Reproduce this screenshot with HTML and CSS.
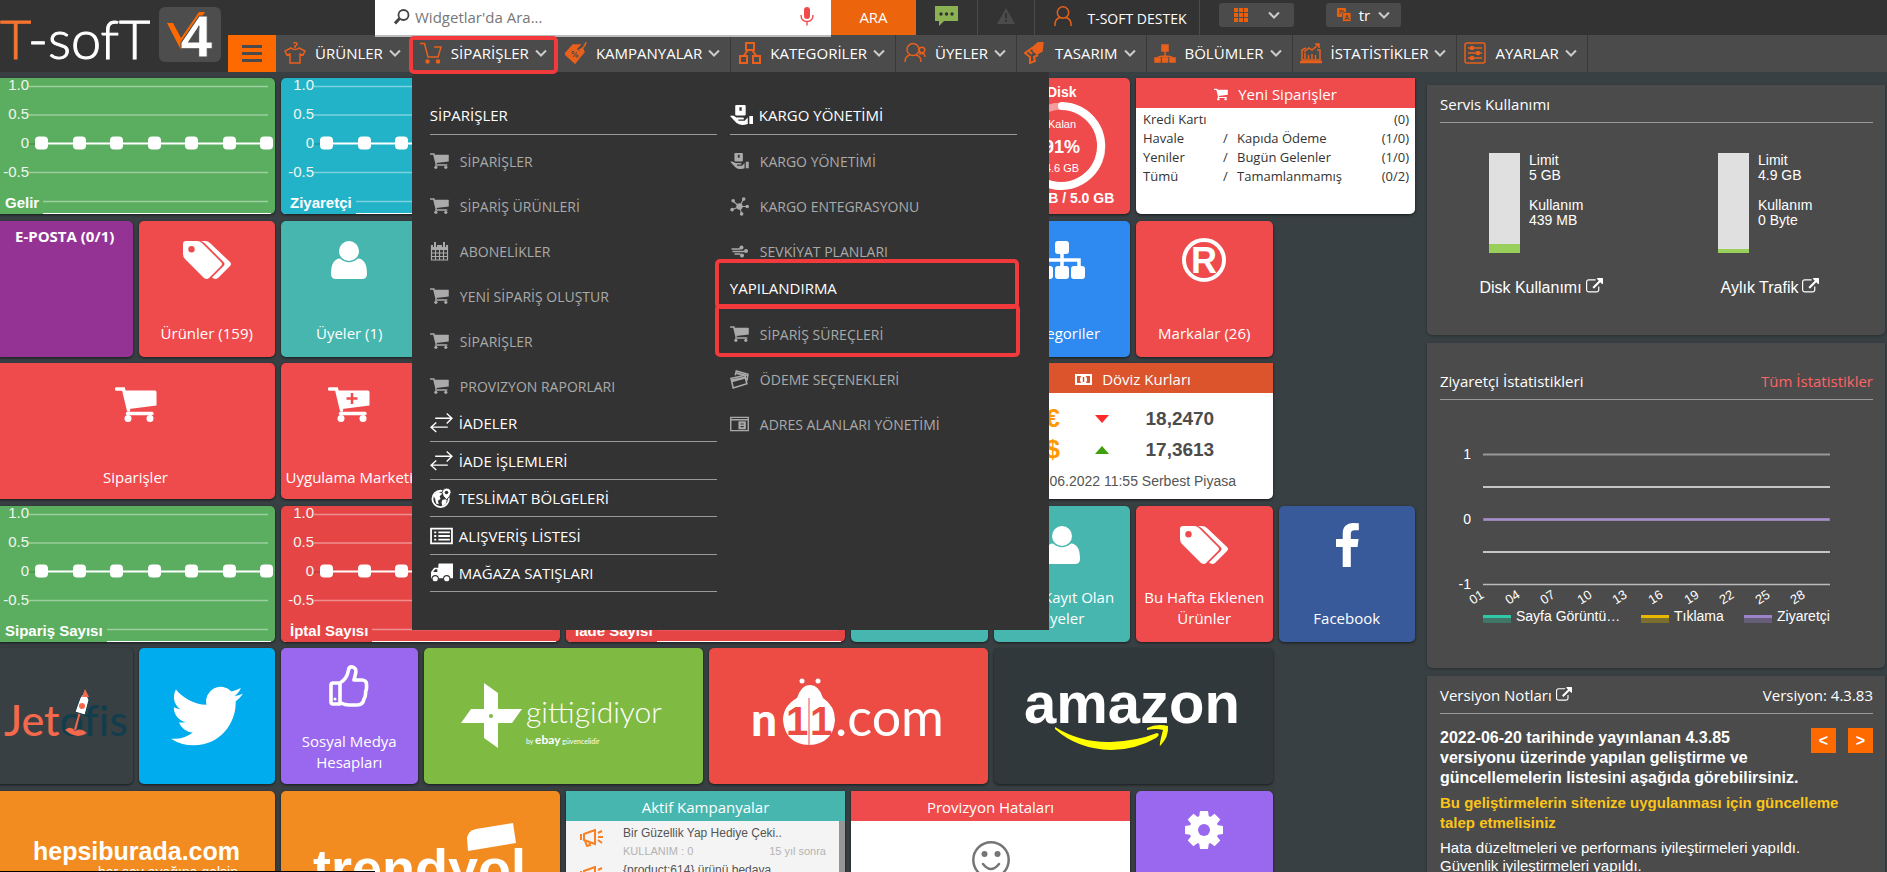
FILE: index.html
```html
<!DOCTYPE html>
<html lang="tr">
<head>
<meta charset="utf-8">
<title>T-Soft V4</title>
<link rel="stylesheet" href="styles.css">
</head>
<body>
<svg class="defs" aria-hidden="true">
  <symbol id="cart" viewBox="0 0 42 35"><path d="M1.5 2H8.5L13.5 23" fill="none" stroke="currentColor" stroke-width="3.4" stroke-linecap="round"/><path d="M8 3.5H40Q41.500 3.500 41.500 5V18.500L14 22Z" fill="currentColor"/><path d="M12.500 26.500H37" stroke="currentColor" stroke-width="3.400" stroke-linecap="round"/><circle cx="13" cy="31.500" r="3.500" fill="currentColor"/><circle cx="35" cy="31.500" r="3.500" fill="currentColor"/></symbol>
  <symbol id="tags" viewBox="0 0 48 38"><path fill="currentColor" fill-rule="evenodd" d="M0 3Q0 0 3 0H14Q17 0 19 2L38 21Q40 23 38 25L26 37Q24 39 21 37L2 18Q0 16 0 13ZM8.500 5A3.200 3.200 0 1 0 8.500 11.400A3.200 3.200 0 1 0 8.500 5Z"/><path fill="currentColor" d="M18 0H22Q25 0 27 2L47 21Q49 23 47 25L35 37Q32 39 29 36.500L40.500 25Q42.500 23 40.500 21L22 2.500Q20 0.500 18 0Z"/></symbol>
  <symbol id="user" viewBox="0 0 36 38"><circle cx="18" cy="10" r="10" fill="currentColor"/><path fill="currentColor" d="M9 17.500Q18 25 27 17.500Q36 18 36 33Q36 38 31 38H5Q0 38 0 33Q0 18 9 17.500Z"/></symbol>
  <symbol id="chev" viewBox="0 0 12 8"><path d="M1 1.500L6 6.500L11 1.500" fill="none" stroke="#ccc" stroke-width="2"/></symbol>
  <symbol id="ext" viewBox="0 0 1792 1792"><path fill="currentColor" d="M1408 928v320q0 119-84.5 203.5t-203.5 84.5h-832q-119 0-203.5-84.5t-84.5-203.5v-832q0-119 84.5-203.5t203.500-84.500h704q14 0 23 9t9 23v64q0 14-9 23t-23 9h-704q-66 0-113 47t-47 113v832q0 66 47 113t113 47h832q66 0 113-47t47-113v-320q0-14 9-23t23-9h64q14 0 23 9t9 23zm384-864v512q0 26-19 45t-45 19-45-19l-176-176-652 652q-10 10-23 10t-23-10l-114-114q-10-10-10-23t10-23l652-652-176-176q-19-19-19-45t19-45 45-19h512q26 0 45 19t19 45z"/></symbol>
  <symbol id="swap" viewBox="0 0 22 19"><path d="M5 5H21M16 0.500L21 5L16 10M17 13.500H1M6 9L1 13.500L6 18" fill="none" stroke="currentColor" stroke-width="1.300"/></symbol>
  <symbol id="hand" viewBox="0 0 22 19"><path fill="currentColor" fill-rule="evenodd" d="M6 0H14Q15 0 15 1V9Q15 10 14 10H6Q5 10 5 9V1Q5 0 6 0ZM9 2V5.500H11.200V2Z"/><path fill="currentColor" d="M0 10.500Q3 9 6 12H12Q14 12 13 13.800H8V15H14L17 12V18Q10 20.500 6 17ZM18.500 10.500H22V18H18.500Z"/></symbol>
  <symbol id="line-chart" viewBox="0 0 279 136">
    <g stroke="#fff" stroke-opacity=".4" stroke-width="1.500"><path d="M33 8.500H272M33 37H272M33 94.500H272M33 123.500H272"/></g>
    <path d="M33 66H46" stroke="#000" stroke-opacity=".25"/>
    <path d="M46 65.500H272" stroke="#fff" stroke-width="2"/>
    <path d="M0 135.500H275" stroke="#fff"/>
    <g fill="#fff"><rect x="39" y="58.500" width="13" height="13" rx="4"/><rect x="77" y="58.500" width="13" height="13" rx="4"/><rect x="114" y="58.500" width="13" height="13" rx="4"/><rect x="152" y="58.500" width="13" height="13" rx="4"/><rect x="189" y="58.500" width="13" height="13" rx="4"/><rect x="227" y="58.500" width="13" height="13" rx="4"/><rect x="264" y="58.500" width="13" height="13" rx="4"/></g>
  </symbol>
</svg>

<header class="header">
  <a class="brand" href="#" aria-label="T-Soft V4">
    <svg width="222" height="68" viewBox="0 0 222 68">
      <text class="brand-word" x="0" y="59"><tspan fill="#f47431">T</tspan>-sofT</text>
      <rect x="159" y="7" width="62" height="55" rx="6" fill="#4d4d4d"/>
      <path d="M167 23H173L181 38L199 12H205L181 50Z" fill="#ff6a00"/>
      <text class="brand-four" x="180" y="57">4</text>
    </svg>
  </a>
  <div class="bars">
    <div class="topbar">
      <form class="search">
        <label class="search-box">
          <svg width="16" height="16" viewBox="0 0 16 16"><circle cx="9.500" cy="6" r="5" fill="none" stroke="#444" stroke-width="1.800"/><path d="M5.500 9.500L1 14.500" stroke="#444" stroke-width="3"/></svg>
          <input type="text" placeholder="Widgetlar'da Ara..." aria-label="Widgetlar'da Ara">
          <svg width="14" height="19" viewBox="0 0 14 19"><rect x="4" y="0" width="6" height="12" rx="3" fill="#ef4a4c"/><path d="M1 8Q1 14.500 7 14.500Q13 14.500 13 8M7 14V18.500" fill="none" stroke="#ef4a4c" stroke-width="1.400"/></svg>
        </label>
        <button class="search-go" type="button">ARA</button>
      </form>
      <button class="top-cell" type="button" aria-label="Mesajlar"><svg width="23" height="20" viewBox="0 0 23 20"><path d="M0 0H23V15H9L4 20V15H0Z" fill="#8ab152"/><g fill="#333"><circle cx="6" cy="8" r="1.700"/><circle cx="11.500" cy="8" r="1.700"/><circle cx="17" cy="8" r="1.700"/></g></svg></button>
      <button class="top-cell" type="button" aria-label="Uyarılar"><svg width="18" height="16" viewBox="0 0 18 16"><path d="M9 0L18 16H0Z" fill="#4b4b4b"/><path d="M9 5V10.500M9 12V14" stroke="#333" stroke-width="2"/></svg></button>
      <button class="top-cell account" type="button"><svg width="18" height="20" viewBox="0 0 18 20"><g fill="none" stroke="#e8601c" stroke-width="1.500"><circle cx="9" cy="6.500" r="5.700"/><path d="M1 20Q0.500 13 6 11.500M17 20Q17.500 13 12 11.500"/></g></svg><span>T-SOFT DESTEK</span></button>
      <button class="pill pill-grid" type="button" aria-label="Uygulamalar"><svg width="14" height="14" viewBox="0 0 14 14"><path d="M2 0V14M7 0V14M12 0V14" stroke="#e8600c" stroke-width="4"/><path d="M0 4.500H14M0 9.500H14" stroke="#4b4b4b"/></svg><svg class="chev" width="12" height="8"><use href="#chev"/></svg></button>
      <button class="pill pill-lang" type="button"><svg width="14" height="14" viewBox="0 0 14 14"><rect width="9" height="9" rx="1" fill="#e8600c"/><rect x="5.500" y="4.500" width="8.500" height="9" rx="1" fill="#e8600c" stroke="#4b4b4b" stroke-width=".8"/><path d="M2 3H7M4.500 2V3Q4 5 2 6M8 12L10 7L12 12M9 10.500H11" fill="none" stroke="#4b4b4b"/></svg><span>tr</span><svg class="chev" width="12" height="8"><use href="#chev"/></svg></button>
    </div>
    <nav class="nav">
      <button class="burger" type="button" aria-label="Menü"><svg width="20" height="17" viewBox="0 0 20 17"><path d="M0 1.500H20M0 8.500H20M0 15.500H20" stroke="#4b4b4b" stroke-width="3"/></svg></button>
      <a class="nav-item" href="#"><svg class="ni" viewBox="0 0 22 22"><path d="M7 6L1 9L3 13L6 12V21H16V12L19 13L21 9L15 6Q11 9 7 6ZM11 6V4Q14 3 12.500 1Q11 0 9.500 1.500"/></svg>ÜRÜNLER<svg class="chev" width="12" height="8"><use href="#chev"/></svg></a>
      <div class="nav-slot">
        <a class="nav-item" href="#"><svg class="ni" viewBox="0 0 22 22"><path d="M0 1.500H4.500L8 15H18L21 5H14"/><circle cx="7.500" cy="19.500" r="1.500" fill="currentColor"/><circle cx="18" cy="19.500" r="1.500" fill="currentColor"/></svg>SİPARİŞLER<svg class="chev" width="12" height="8"><use href="#chev"/></svg></a>
        <span class="mark mark-nav"></span>
        <div class="menu">
          <section class="menu-col">
            <h3 class="menu-head">SİPARİŞLER</h3>
            <ul class="menu-list">
              <li><a href="#"><svg class="mi"><use href="#cart"/></svg>SİPARİŞLER</a></li>
              <li><a href="#"><svg class="mi"><use href="#cart"/></svg>SİPARİŞ ÜRÜNLERİ</a></li>
              <li><a href="#"><svg class="mi mi-tall" viewBox="0 0 18 19"><path d="M1 3.500H17V18H1ZM1 7.500H17M1 11H17M1 14.500H17M5 7V18M9 7V18M13 7V18" fill="none" stroke="currentColor" stroke-width="1.200"/><path d="M0.500 3H17.500V7H0.500Z" fill="currentColor"/><path d="M4.500 0V5M13.500 0V5" stroke="#333" stroke-width="4"/><path d="M4.500 0V5M13.500 0V5" stroke="currentColor" stroke-width="2"/></svg>ABONELİKLER</a></li>
              <li><a href="#"><svg class="mi"><use href="#cart"/></svg>YENİ SİPARİŞ OLUŞTUR</a></li>
              <li><a href="#"><svg class="mi"><use href="#cart"/></svg>SİPARİŞLER</a></li>
              <li><a href="#"><svg class="mi"><use href="#cart"/></svg>PROVIZYON RAPORLARI</a></li>
            </ul>
            <div class="menu-heads">
              <h3 class="menu-head"><svg class="mh"><use href="#swap"/></svg>İADELER</h3>
              <h3 class="menu-head"><svg class="mh"><use href="#swap"/></svg>İADE İŞLEMLERİ</h3>
              <h3 class="menu-head"><svg class="mh" viewBox="0 0 22 22"><circle cx="10" cy="12" r="9" fill="none" stroke="currentColor" stroke-width="2"/><path fill="currentColor" d="M2 8L7 4L12 6L9 9L10 12L7 14L8 18L5 17L4 12ZM12 13L17 12L16 17L12 20L11 16Z"/><path d="M16.500 0Q21.500 0.500 21.500 5Q21 9 16.500 13Q12 9 11.500 5Q12 0.500 16.500 0Z" fill="currentColor" stroke="#333"/><circle cx="16.500" cy="5" r="2" fill="#333"/></svg>TESLİMAT BÖLGELERİ</h3>
              <h3 class="menu-head"><svg class="mh" viewBox="0 0 22 16"><path d="M1 1H21V15H1ZM4 4.500H6M4 8H6M4 11.500H6M8 4.500H19M8 8H19M8 11.500H19" fill="none" stroke="currentColor" stroke-width="1.700"/></svg>ALIŞVERİŞ LİSTESİ</h3>
              <h3 class="menu-head"><svg class="mh" viewBox="0 0 22 18"><path d="M8 1Q8 0 9 0H22V14H1V8L4 4H8Z" fill="currentColor"/><path d="M3 8L5 5.500H7V8Z" fill="#333"/><g fill="currentColor" stroke="#333"><circle cx="5" cy="14.500" r="3"/><circle cx="16" cy="14.500" r="3"/></g></svg>MAĞAZA SATIŞLARI</h3>
            </div>
          </section>
          <section class="menu-col">
            <h3 class="menu-head"><svg class="mh"><use href="#hand"/></svg>KARGO YÖNETİMİ</h3>
            <ul class="menu-list">
              <li><a href="#"><svg class="mi"><use href="#hand"/></svg>KARGO YÖNETİMİ</a></li>
              <li><a href="#"><svg class="mi mi-tall" viewBox="0 0 18 18"><path d="M9 9L3 4M9 9L13 2M9 9L16 9M9 9L2 12M9 9L11 16" stroke="currentColor"/><g fill="currentColor"><circle cx="9" cy="9" r="3"/><circle cx="3" cy="3.500" r="1.700"/><circle cx="13" cy="2" r="1.700"/><circle cx="16.300" cy="9" r="1.700"/><circle cx="2" cy="12" r="1.700"/><circle cx="11" cy="16" r="1.700"/></g></svg>KARGO ENTEGRASYONU</a></li>
              <li><a href="#"><svg class="mi" viewBox="0 0 18 16"><path d="M1 6H10M2 8.500H14M4 11H10" fill="none" stroke="currentColor" stroke-width="1.600"/><g fill="currentColor"><circle cx="11" cy="4.500" r="2"/><circle cx="15.500" cy="8" r="2"/><circle cx="11.500" cy="12.500" r="2"/></g></svg>SEVKİYAT PLANLARI</a></li>
            </ul>
            <div class="marked"><h3 class="menu-head menu-head-plain">YAPILANDIRMA</h3><span class="mark mark-head"></span></div>
            <ul class="menu-list">
              <li class="marked"><a href="#"><svg class="mi"><use href="#cart"/></svg>SİPARİŞ SÜREÇLERİ</a><span class="mark mark-row"></span></li>
              <li><a href="#"><svg class="mi mi-tall" viewBox="0 0 18 18"><path d="M1 8L14 5L16 13L3 17Z M5 5L6 1L17 4L16 10" fill="none" stroke="currentColor" stroke-width="1.500"/><path d="M1 9L15 6V8L2 11.500ZM6 2L17 5V6L6 4Z" fill="currentColor"/></svg>ÖDEME SEÇENEKLERİ</a></li>
              <li><a href="#"><svg class="mi" viewBox="0 0 18 14"><path d="M0.700 0.700H17.300V13.300H0.700ZM0.700 3H17.300" fill="none" stroke="currentColor" stroke-width="1.300"/><path d="M8 4.500H15V12H8Z" fill="currentColor"/><path d="M10 7H13M10 9.500H13" stroke="#333"/></svg>ADRES ALANLARI YÖNETİMİ</a></li>
            </ul>
          </section>
        </div>
      </div>
      <a class="nav-item" href="#"><svg class="ni" viewBox="0 0 22 22"><path d="M0 12L8 3L16 3L19 10L10 21Z" fill="currentColor"/><path d="M13 8L20 1" stroke="#4b4b4b" stroke-width="3"/><path d="M14 8Q20 6 21 0"/><circle cx="8" cy="10.500" r="1.200" stroke="#4b4b4b" stroke-width="1"/><circle cx="12" cy="14" r="1.200" stroke="#4b4b4b" stroke-width="1"/><path d="M12 10L8 15" stroke="#4b4b4b" stroke-width="1"/></svg>KAMPANYALAR<svg class="chev" width="12" height="8"><use href="#chev"/></svg></a>
      <a class="nav-item" href="#"><svg class="ni" viewBox="0 0 22 22"><path d="M7 1H15V8H7ZM1 14H8V21H1ZM14 14H21V21H14ZM9 8L4.500 14M13 8L17.500 14" stroke-width="2"/></svg>KATEGORİLER<svg class="chev" width="12" height="8"><use href="#chev"/></svg></a>
      <a class="nav-item" href="#"><svg class="ni" viewBox="0 0 22 22"><circle cx="9" cy="7.500" r="6"/><path d="M1 20Q1 14 6 13M17 20Q17 14 12 13M15 12Q21 10 21 15"/><circle cx="18" cy="8" r="2.800"/></svg>ÜYELER<svg class="chev" width="12" height="8"><use href="#chev"/></svg></a>
      <a class="nav-item" href="#"><svg class="ni" viewBox="0 0 22 22"><path d="M8 6L15 0L19 0L18 9L13 12Z" fill="currentColor"/><path d="M8 6L1 11L6 15L6 21L11 19L10 15L14 13M5 9L8 12M9 8L12 11" stroke-width="2"/></svg>TASARIM<svg class="chev" width="12" height="8"><use href="#chev"/></svg></a>
      <a class="nav-item" href="#"><svg class="ni" viewBox="0 0 22 22"><path d="M8 3H14V9H8ZM1 16H6V20H1ZM8.500 16H13.500V20H8.500ZM16 16H21V20H16Z" fill="currentColor"/><path d="M11 9V16M3.500 16Q4 14 11 14Q18 14 18.500 16"/></svg>BÖLÜMLER<svg class="chev" width="12" height="8"><use href="#chev"/></svg></a>
      <a class="nav-item" href="#"><svg class="ni" viewBox="0 0 22 22"><path d="M2 18V8L6 6M2 18H20V8H17M5 17V11M8.500 17V13M12 17V12M15.500 17V13M4 10L9 6L12 8L19 2M15 2H19V6"/><path d="M0 20H22" stroke-width="2.500"/></svg>İSTATİSTİKLER<svg class="chev" width="12" height="8"><use href="#chev"/></svg></a>
      <a class="nav-item" href="#"><svg class="ni" viewBox="0 0 22 22"><rect x="1" y="1" width="20" height="20" rx="2"/><path d="M4 6H18M4 11H18M4 16H18"/><g fill="currentColor"><circle cx="8" cy="6" r="1.500"/><circle cx="14" cy="11" r="1.500"/><circle cx="8" cy="16" r="1.500"/></g></svg>AYARLAR<svg class="chev" width="12" height="8"><use href="#chev"/></svg></a>
    </nav>
  </div>
</header>

<main class="page">
  <div class="board">
    <article class="tile chart green r1 c1 w2"><svg><use href="#line-chart"/></svg><div class="axis"><span>1.0</span><span>0.5</span><span>0</span><span>-0.5</span></div><h4>Gelir</h4></article>
    <article class="tile chart cyan r1 c3 w2"><svg><use href="#line-chart"/></svg><div class="axis"><span>1.0</span><span>0.5</span><span>0</span><span>-0.5</span></div><h4>Ziyaretçi</h4></article>
    <article class="tile red r1 c8 disk">
      <h4>Disk</h4>
      <svg width="88" height="88" viewBox="0 0 88 88"><circle cx="44" cy="44" r="40" fill="none" stroke="#fff" stroke-opacity=".45" stroke-width="7"/><path d="M44 4A40 40 0 1 1 22 10" fill="none" stroke="#fff" stroke-width="8" stroke-linecap="round"/><g class="ring"><text x="44" y="26">Kalan</text><text class="ring-big" x="44" y="51">91%</text><text x="44" y="70">4.6 GB</text></g></svg>
      <p>439 MB / 5.0 GB</p>
    </article>
    <article class="tile panel r1 c9 w2">
      <h4 class="panel-head red"><svg width="14" height="13"><use href="#cart"/></svg>Yeni Siparişler</h4>
      <table class="orders">
        <tr><td>Kredi Kartı</td><td></td><td></td><td>(0)</td></tr>
        <tr><td>Havale</td><td>/</td><td>Kapıda Ödeme</td><td>(1/0)</td></tr>
        <tr><td>Yeniler</td><td>/</td><td>Bugün Gelenler</td><td>(1/0)</td></tr>
        <tr><td>Tümü</td><td>/</td><td>Tamamlanmamış</td><td>(0/2)</td></tr>
      </table>
    </article>

    <a class="tile purple r2 c1 mail" href="#">E-POSTA (0/1)</a>
    <a class="tile icon-tile red r2 c2" href="#"><svg width="48" height="38"><use href="#tags"/></svg><span>Ürünler (159)</span></a>
    <a class="tile icon-tile teal r2 c3" href="#"><svg width="36" height="38"><use href="#user"/></svg><span>Üyeler (1)</span></a>
    <a class="tile icon-tile blue r2 c8" href="#"><svg width="46" height="38" viewBox="0 0 46 38"><g fill="currentColor"><rect x="16" width="14" height="13" rx="3"/><rect y="25" width="14" height="13" rx="3"/><rect x="16" y="25" width="14" height="13" rx="3"/><rect x="32" y="25" width="14" height="13" rx="3"/></g><path d="M23 12V26M6 26V19H40V26" fill="none" stroke="currentColor" stroke-width="3.500"/></svg><span>Kategoriler</span></a>
    <a class="tile icon-tile red r2 c9" href="#"><svg width="46" height="46" viewBox="0 0 46 46"><circle cx="23" cy="23" r="20" fill="none" stroke="currentColor" stroke-width="4"/><text class="reg" x="23" y="36">R</text></svg><span>Markalar (26)</span></a>

    <a class="tile icon-tile low red r3 c1 w2" href="#"><svg width="42" height="35"><use href="#cart"/></svg><span>Siparişler</span></a>
    <a class="tile icon-tile low red r3 c3" href="#"><svg width="42" height="35" viewBox="0 0 42 35"><use href="#cart"/><path d="M24 6V17M18.500 11.500H29.500" stroke="#ef4a4c" stroke-width="2.500"/></svg><span>Uygulama Marketi</span></a>
    <article class="tile panel r3 c8 w2">
      <h4 class="panel-head rust"><svg width="17" height="11" viewBox="0 0 17 11"><path d="M1 1H16V10H1Z" fill="none" stroke="#fff" stroke-width="2"/><ellipse cx="8.500" cy="5.500" rx="3.500" ry="4" fill="#fff"/><path d="M8.500 3V8" stroke="#db542c" stroke-width="1.500"/></svg>Döviz Kurları</h4>
      <div class="rates">
        <b class="cur">€</b><svg width="14" height="8" viewBox="0 0 14 8"><path d="M0 0H14L7 8Z" fill="#fb2b2b"/></svg><b>18,2470</b>
        <b class="cur">$</b><svg width="14" height="8" viewBox="0 0 14 8"><path d="M0 8H14L7 0Z" fill="#3da00c"/></svg><b>17,3613</b>
      </div>
      <p class="rate-date">24.06.2022 11:55 Serbest Piyasa</p>
    </article>

    <article class="tile chart green r4 c1 w2"><svg><use href="#line-chart"/></svg><div class="axis"><span>1.0</span><span>0.5</span><span>0</span><span>-0.5</span></div><h4>Sipariş Sayısı</h4></article>
    <article class="tile chart crimson r4 c3 w2"><svg><use href="#line-chart"/></svg><div class="axis"><span>1.0</span><span>0.5</span><span>0</span><span>-0.5</span></div><h4>İptal Sayısı</h4></article>
    <article class="tile chart crimson r4 c5 w2"><svg><use href="#line-chart"/></svg><h4>İade Sayısı</h4></article>
    <a class="tile icon-tile teal r4 c7" href="#" aria-label="Üyeler"><svg width="36" height="38"><use href="#user"/></svg></a>
    <a class="tile icon-tile teal r4 c8" href="#"><svg width="36" height="38"><use href="#user"/></svg><span>Yeni Kayıt Olan Üyeler</span></a>
    <a class="tile icon-tile red r4 c9" href="#"><svg width="48" height="38"><use href="#tags"/></svg><span>Bu Hafta Eklenen Ürünler</span></a>
    <a class="tile icon-tile navy r4 c10" href="#"><svg width="48" height="44" viewBox="0 0 1792 1664"><path fill="currentColor" d="M1343 12v264h-157q-86 0-116 36t-30 108v189h293l-39 296h-254v759h-306v-759h-255v-296h255v-218q0-186 104-288.500t277-102.500q147 0 228 12z"/></svg><span>Facebook</span></a>

    <a class="tile logo r5 c1 plain" href="#"><svg width="130" height="80" viewBox="0 0 130 80"><text class="jet" x="1" y="60"><tspan fill="#f4694c">Jet</tspan><tspan fill="#123d4d">ofis</tspan></text><path d="M72 54L78 32" stroke="#f4694c" stroke-width="2"/><path d="M72 36L77 22L82 15L86 24L82 39Z" fill="#fff" stroke="#123d4d"/><path d="M79 21L82 13L86 21Z" fill="#f4694c"/><circle cx="79" cy="30" r="3" fill="#f4694c"/><path d="M62 54Q68 49 72 55Q78 51 84 57Q74 64 62 54Z" fill="#f4694c"/></svg></a>
    <a class="tile logo sky r5 c2" href="#" aria-label="Twitter"><svg width="72" height="72" viewBox="0 0 24 24"><path fill="#fff" d="M23.953 4.570a10 10 0 01-2.825.775 4.958 4.958 0 002.163-2.723c-.951.555-2.005.959-3.127 1.184a4.920 4.920 0 00-8.384 4.482C7.690 8.095 4.067 6.130 1.640 3.162a4.822 4.822 0 00-.666 2.475c0 1.710.870 3.213 2.188 4.096a4.904 4.904 0 01-2.228-.616v.060a4.923 4.923 0 003.946 4.827 4.996 4.996 0 01-2.212.085 4.936 4.936 0 004.604 3.417 9.867 9.867 0 01-6.102 2.105c-.390 0-.779-.023-1.170-.067a13.995 13.995 0 007.557 2.209c9.053 0 13.998-7.496 13.998-13.985 0-.210 0-.420-.015-.630A9.935 9.935 0 0024 4.590z"/></svg></a>
    <a class="tile icon-tile violet r5 c3" href="#"><svg width="40" height="42" viewBox="0 0 40 42"><path d="M11 18Q18 14 19.500 5Q20 1.500 23.500 2Q28 3 26.500 9L25 15H33Q38 15.500 37.500 20Q38 24 36.500 27Q37 31 35 34Q34 40 28 40H20Q16 40 12 38M2 20Q2 18 4 18H11V39H4Q2 39 2 37Z" fill="none" stroke="currentColor" stroke-width="3.600" stroke-linejoin="round"/><circle cx="6" cy="34" r="1.500" fill="currentColor"/></svg><span>Sosyal Medya Hesapları</span></a>
    <a class="tile logo lime r5 c4 w2" href="#"><svg width="206" height="80" viewBox="0 0 206 80"><path fill="#fff" d="M24 7L38 17V33H62L52 47H38V72L24 62V47H1L11 33H24Z"/><circle cx="31" cy="40" r="2" fill="#7fba43"/><text class="gg" x="66" y="47">gittigidiyor</text><text class="gg-by" x="66" y="68">by <tspan class="gg-ebay">ebay</tspan> güvencelidir</text></svg></a>
    <a class="tile logo coral r5 c6 w2" href="#"><svg width="200" height="80" viewBox="0 0 200 80"><text class="n11" x="3" y="60">n</text><path fill="#fff" d="M49 22Q53 9 62 9Q71 9 75 22Q87 30 87 44Q85 68 61 69Q37 68 35 44Q35 30 49 22Z"/><circle cx="54" cy="5" r="2.500" fill="#fff"/><circle cx="70" cy="5" r="2.500" fill="#fff"/><text class="n11-num" x="38" y="59">1</text><text class="n11-num" x="62" y="59">1</text><path d="M61 22V69" stroke="#ec4c44"/><text class="n11-com" x="87" y="60">.com</text></svg></a>
    <a class="tile logo dark r5 c8 w2" href="#"><svg width="220" height="84" viewBox="0 0 220 84"><text class="amz" x="1" y="49">amazon</text><path fill="#ff0" d="M32 53Q58 69 88 68Q114 67 134 59Q138 60 133 64Q112 76 88 76Q54 75 32 55ZM124 54Q134 49 145 52Q146 63 137 72Q136 71 140 56Q134 54 124 56Z"/></svg></a>

    <a class="tile logo orange r6 c1 w2" href="#"><svg width="206" height="60" viewBox="0 0 206 60"><text class="hb" x="0" y="30">hepsiburada.com</text><text class="hb-sub" x="205" y="47">her şey ayağına gelsin</text></svg></a>
    <a class="tile logo orange r6 c3 w2" href="#"><svg width="216" height="96" viewBox="0 0 216 96"><path fill="#fff" d="M154 15Q155 8 163 6L200 0L203 20L155 28Z"/><text class="ty" x="0" y="64">trendyol</text></svg></a>
    <article class="tile panel r6 c5 w2">
      <h4 class="panel-head teal">Aktif Kampanyalar</h4>
      <ul class="camps">
        <li><svg width="24" height="18" viewBox="0 0 24 18"><path d="M1 5V11M4 5L15 1V15L4 11ZM5 12L7 17L10 16L9 13M18 4L22 2M18 8H23M18 11L22 14" fill="none" stroke="#f98024" stroke-width="2"/></svg><div><p>Bir Güzellik Yap Hediye Çeki..</p><p class="camp-meta"><span>KULLANIM : 0</span><span>15 yıl sonra</span></p></div></li>
        <li><svg width="24" height="18" viewBox="0 0 24 18"><path d="M1 5V11M4 5L15 1V15L4 11ZM5 12L7 17L10 16L9 13M18 4L22 2M18 8H23M18 11L22 14" fill="none" stroke="#f98024" stroke-width="2"/></svg><div><p>{product:614} ürünü bedava</p></div></li>
      </ul>
    </article>
    <article class="tile panel r6 c7 w2">
      <h4 class="panel-head red">Provizyon Hataları</h4>
      <svg class="smile" width="38" height="38" viewBox="0 0 38 38"><circle cx="19" cy="19" r="17.700" fill="none" stroke="#757575" stroke-width="2.500"/><circle cx="12.500" cy="13" r="3" fill="#757575"/><circle cx="25.500" cy="13" r="3" fill="#757575"/><path d="M11 23Q19 33 27 23" fill="none" stroke="#757575" stroke-width="2.500" stroke-linecap="round"/></svg>
    </article>
    <a class="tile icon-tile violet r6 c9" href="#" aria-label="Ayarlar"><svg width="38" height="38" viewBox="-19 -19 38 38"><g fill="currentColor"><path id="tooth" d="M-5-12L-4-19H4L5-12V12L4 19H-4L-5 12Z"/><use href="#tooth" transform="rotate(45)"/><use href="#tooth" transform="rotate(90)"/><use href="#tooth" transform="rotate(135)"/><circle r="14.500"/></g><circle r="6" fill="#9a68ee"/></svg></a>
  </div>

  <aside class="side">
    <section class="card">
      <h4 class="card-head">Servis Kullanımı</h4>
      <div class="usage">
        <div class="usage-item">
          <div class="usage-row"><div class="meter"><i style="height:9%"></i></div><p>Limit<br>5 GB<br><br>Kullanım<br>439 MB</p></div>
          <a href="#">Disk Kullanımı <svg width="17" height="17"><use href="#ext"/></svg></a>
        </div>
        <div class="usage-item">
          <div class="usage-row"><div class="meter"><i style="height:4%"></i></div><p>Limit<br>4.9 GB<br><br>Kullanım<br>0 Byte</p></div>
          <a href="#">Aylık Trafik <svg width="17" height="17"><use href="#ext"/></svg></a>
        </div>
      </div>
    </section>
    <section class="card stats">
      <h4 class="card-head">Ziyaretçi İstatistikleri <a href="#">Tüm İstatistikler</a></h4>
      <svg class="stats-chart" viewBox="0 0 433 184">
        <path d="M43 13.500H390" stroke="#999" stroke-width="2"/>
        <path d="M43 46H390M43 111H390" stroke="#eee" stroke-width="1.500"/><path d="M43 143.500H390" stroke="#bbb" stroke-width="1.500"/>
        <path d="M43 78.500H390" stroke="#827f86" stroke-width="3"/><path d="M44 78.500H389" stroke="#a98bd6" stroke-width="2"/>
        <g class="y"><text x="31" y="18">1</text><text x="31" y="83">0</text><text x="31" y="148">-1</text></g>
        <g class="x"><text transform="translate(45 156) rotate(-32)">01</text><text transform="translate(81 156) rotate(-32)">04</text><text transform="translate(116 156) rotate(-32)">07</text><text transform="translate(153 156) rotate(-32)">10</text><text transform="translate(188 156) rotate(-32)">13</text><text transform="translate(224 156) rotate(-32)">16</text><text transform="translate(260 156) rotate(-32)">19</text><text transform="translate(295 156) rotate(-32)">22</text><text transform="translate(331 156) rotate(-32)">25</text><text transform="translate(366 156) rotate(-32)">28</text></g>
        <g><rect x="43" y="174" width="28" height="8" fill="#417568"/><rect x="43" y="174" width="28" height="3" fill="#2fc9a8"/><rect x="201" y="174" width="28" height="8" fill="#7b6f2f"/><rect x="201" y="174" width="28" height="3" fill="#e8b800"/><rect x="304" y="174" width="28" height="8" fill="#665d78"/><rect x="304" y="174" width="28" height="3" fill="#9b82c9"/></g>
        <g class="legend"><text x="76" y="180">Sayfa Görüntü…</text><text x="234" y="180">Tıklama</text><text x="337" y="180">Ziyaretçi</text></g>
      </svg>
    </section>
    <section class="card notes">
      <h4 class="card-head"><span>Versiyon Notları <svg width="16" height="16"><use href="#ext"/></svg></span><span>Versiyon: 4.3.83</span></h4>
      <div class="note-top"><strong>2022-06-20 tarihinde yayınlanan 4.3.85 versiyonu üzerinde yapılan geliştirme ve güncellemelerin listesini aşağıda görebilirsiniz.</strong><div class="pager"><button type="button">&lt;</button><button type="button">&gt;</button></div></div>
      <p class="note-warn">Bu geliştirmelerin sitenize uygulanması için güncelleme talep etmelisiniz</p>
      <p class="note-body">Hata düzeltmeleri ve performans iyileştirmeleri yapıldı.<br>Güvenlik iyileştirmeleri yapıldı.</p>
    </section>
  </aside>
</main>
<div class="status-line"></div>
</body>
</html>
```

FILE: styles.css
```css
* { box-sizing: border-box; }
html, body { height: 100%; }
body {
  margin: 0;
  display: flex;
  flex-direction: column;
  overflow: hidden;
  background: #394043;
  color: #fff;
  font-family: "Open Sans", sans-serif;
  font-size: 15px;
}
h3, h4, p, ul { margin: 0; padding: 0; font-weight: 400; }
ul { list-style: none; }
a { color: inherit; text-decoration: none; }
button, input { font: inherit; color: inherit; border: 0; background: none; padding: 0; }
svg { flex: none; display: block; }
.defs { position: absolute; width: 0; height: 0; }

/* Header */
.header { position: relative; z-index: 5; display: flex; flex: none; background: #333; }
.brand { width: 228px; }
.brand-word { font: 300 54px Lato, sans-serif; fill: #fff; stroke: #fff; stroke-width: 1px; }
.brand-word tspan { stroke: #f47431; }
.brand-four { font: 700 58px "Open Sans", sans-serif; fill: #fff; stroke: #4d4d4d; stroke-width: 1px; }
.bars { flex: 1; }
.topbar { display: flex; height: 35px; padding-left: 147px; align-items: stretch; }
.search { position: relative; z-index: 1; display: flex; width: 541px; }
.search-box { flex: 1; display: flex; align-items: center; gap: 5px; padding: 0 17px 2px 19px; background: #fff; box-shadow: 0 2px #bbb; }
.search-box input { flex: 1; min-width: 0; outline: 0; color: #444; }
.search-box input::placeholder { color: #777; opacity: 1; }
.search-go { width: 85px; padding-bottom: 2px; background: #ec640c; }
.top-cell { display: flex; align-items: center; justify-content: center; width: 62px; padding-bottom: 4px; border-right: 1px solid #4b4b4b; }
.top-cell + .top-cell { width: 57px; }
.top-cell + .top-cell.account { width: 165px; padding-left: 7px; gap: 15px; font-size: 14px; }
.account span { padding-top: 6px; }
.pill { display: flex; align-items: center; justify-content: center; width: 75px; height: 24px; margin-top: 3px; background: #4b4b4b; border-radius: 3px; }
.pill-grid { margin-left: 19px; gap: 20px; }
.pill-lang { margin-left: 32px; gap: 8px; }
.nav { display: flex; height: 37px; background: #4b4b4b; }
.burger { display: flex; align-items: center; justify-content: center; width: 48px; background: #ff6a00; }
.nav-slot { position: relative; display: flex; }
.nav-item { display: flex; align-items: center; padding: 0 10px 2px 8px; border-right: 1px solid #383838; }
.nav-slot .nav-item { padding-right: 9px; }
.nav > .nav-item:nth-child(n+7) { padding-left: 7px; }
.ni { width: 22px; height: 22px; margin-right: 9px; fill: none; stroke: #e8601c; color: #e8601c; stroke-width: 1.5px; }
.nav-item .chev { margin-left: 6px; }
.mark { position: absolute; border: 4px solid #f23a3c; border-radius: 5px; pointer-events: none; z-index: 2; }
.mark-nav { inset: 1px -1px -2px -3px; }

/* Mega menu */
.menu { position: absolute; top: 100%; left: 0; display: flex; gap: 13px; width: 637px; height: 558px; padding: 25px 32px 0 18px; background: #333; }
.menu-col { flex: 1; }
.menu-head { display: flex; align-items: center; height: 38px; padding-bottom: 2px; border-bottom: 1px solid #999; font-size: 15px; }
.menu-head-plain { border-bottom-color: #111; }
.mh { width: 23px; height: 20px; margin-right: 6px; }
.menu-heads { display: grid; grid-auto-rows: 37px 38px; }
.menu-heads .menu-head { height: auto; padding-bottom: 0; }
.menu-list li { display: flex; height: 45px; padding-top: 7px; }
.menu-list a { display: flex; align-items: center; color: #aaa; font-size: 14px; }
.mi { width: 19px; height: 16px; margin-right: 11px; }
.mi-tall { height: 19px; }
.marked { position: relative; }
.mark-head { inset: -11px -2px -1px -15px; }
.mark-row { inset: -4px -3px -4px -15px; }

/* Board */
.page { display: flex; gap: 12px; padding: 6px 2px 0 0; flex: 1; min-height: 0; margin-left: -4px; overflow: hidden; }
.board { flex: 1; display: grid; grid-template-columns: repeat(10, minmax(0, 1fr)); grid-auto-rows: 137px 136px; gap: 6px; }
.r1 { grid-row: 1; } .r2 { grid-row: 2; } .r3 { grid-row: 3; } .r4 { grid-row: 4; } .r5 { grid-row: 5; } .r6 { grid-row: 6; }
.c1 { grid-column-start: 1; } .c2 { grid-column-start: 2; } .c3 { grid-column-start: 3; } .c4 { grid-column-start: 4; } .c5 { grid-column-start: 5; }
.c6 { grid-column-start: 6; } .c7 { grid-column-start: 7; } .c8 { grid-column-start: 8; } .c9 { grid-column-start: 9; } .c10 { grid-column-start: 10; }
.w2 { grid-column-end: span 2; }
.tile { position: relative; overflow: hidden; height: 136px; border-radius: 5px; box-shadow: 0 1px 3px rgba(0, 0, 0, .6); }
.green { background: #5bae60; }
.cyan { background: #23b3c8; }
.red { background: #ef4a4c; }
.crimson { background: #e64545; }
.teal { background: #46b6af; }
.blue { background: #2e89f0; }
.purple { background: #953395; }
.violet { background: #9a68ee; }
.navy { background: #395a9a; }
.sky { background: #00acee; }
.lime { background: #7fba43; }
.coral { background: #ec4c44; }
.dark { background: #31383b; }
.orange { background: #f28c20; }
.rust { background: #db542c; }

.icon-tile { display: flex; flex-direction: column; align-items: center; justify-content: space-between; padding: 20px 4px 13px; text-align: center; line-height: 21px; color: #fff; }
.icon-tile.low { padding: 24px 4px 11px; white-space: nowrap; }
.icon-tile.r5 { padding: 17px 14px 11px; }
.icon-tile.navy { padding-top: 17px; }
.icon-tile.c9.r2 { padding-top: 16px; }
.reg { font: 700 36px "Liberation Sans", sans-serif; fill: #fff; text-anchor: middle; }
.mail { padding: 5px 0 0 19px; font-weight: 700; }

.chart { font-family: "Liberation Sans", sans-serif; }
.chart svg { width: 279px; height: 136px; }
.axis { position: absolute; top: -8px; left: 0; display: grid; width: 33px; line-height: 29px; text-align: right; color: #f0f7f0; }
.chart h4 { position: absolute; left: 0; bottom: 0; padding: 0 4px 3px 9px; background: inherit; font-size: 15px; font-weight: 700; line-height: 17px; }

.disk { display: flex; flex-direction: column; align-items: center; font: 700 14px/20px "Liberation Sans", sans-serif; padding-top: 4px; }
.disk h4, .disk p { font-weight: 700; white-space: nowrap; }
.disk p { line-height: 17px; }
.ring { font: 11px "Liberation Sans", sans-serif; fill: #fff; text-anchor: middle; }
.ring-big { font-size: 18px; font-weight: 700; }

.panel { background: #fff; color: #333; border-radius: 0 0 5px 5px; }
.panel-head { display: flex; align-items: center; justify-content: center; gap: 10px; height: 30px; padding-top: 2px; color: #fff; }
.orders { width: 100%; padding: 2px 4px 0 5px; border-spacing: 0; font-size: 13px; }
.orders td { padding: 0 2px; height: 19px; line-height: 19px; white-space: nowrap; }
.orders td:nth-child(1) { width: 80px; }
.orders td:nth-child(2) { width: 14px; }
.orders td:last-child { text-align: right; }
.rates { display: grid; grid-template-columns: 66px 36px 1fr; row-gap: 4px; align-items: center; padding: 12px 0 0 50px; font: 19px/27px "Liberation Sans", sans-serif; color: #4c4c4c; }
.cur { padding-left: 2px; color: #ff9800; font-size: 26px; }
.rates svg { margin-left: -15px; }
.rate-date { text-align: center; color: #555; font: 14px/36px "Liberation Sans", sans-serif; }

.logo { display: flex; align-items: center; justify-content: center; }
.plain { justify-content: flex-end; }
.jet { font: 500 43px Lato, sans-serif; }
.gg { font: 300 30px Lato, sans-serif; fill: #fff; }
.gg-by { font: 7px Lato, sans-serif; fill: #fff; }
.gg-ebay { font-size: 12px; font-weight: 700; }
.n11 { font: 900 46px Lato, sans-serif; fill: #fff; }
.n11-num { font: 700 40px "Liberation Sans", sans-serif; fill: #ec4c44; }
.n11-com { font: 400 52px Lato, sans-serif; fill: #fff; }
.amz { font: 700 58px "Liberation Sans", sans-serif; fill: #fff; }
.hb { font: 700 25px "Liberation Sans", sans-serif; fill: #fff; }
.hb-sub { font: 14px "Liberation Sans", sans-serif; fill: #fff; text-anchor: end; }
.ty { font: 700 54px "Liberation Sans", sans-serif; fill: #fff; }
.logo.r6 { align-items: flex-start; padding-top: 32px; }
.logo.r6.c1 { padding-top: 39px; }

.camps { height: 106px; padding: 5px 13px 0 14px; background: #f4f4f4; border-right: 6px solid #969696; font-family: "Liberation Sans", sans-serif; font-size: 12px; color: #555; }
.camps li { display: flex; gap: 19px; height: 37px; padding-top: 3px; }
.camps div { flex: 1; line-height: 9px; }
.camp-meta { display: flex; justify-content: space-between; padding-top: 9px; font-size: 11px; color: #b3b3b3; }
.smile { margin: 20px auto 0; }

/* Sidebar */
.side { width: 458px; flex: none; padding-top: 7px; display: flex; flex-direction: column; gap: 8px; font-family: "Liberation Sans", sans-serif; }
.card { background: #4b4b4b; padding: 0 12px 0 13px; border-radius: 0 0 5px 5px; box-shadow: 0 1px 3px rgba(0, 0, 0, .3); min-height: 250px; }
.stats { min-height: 325px; padding-top: 19px; }
.notes { flex: 1; }
.card-head { display: flex; justify-content: space-between; align-items: center; height: 38px; border-bottom: 1px solid #999; font: 15px "Open Sans", sans-serif; }
.card-head span { display: flex; align-items: center; gap: 4px; }
.card-head a { color: #ff6565; }
.usage { display: grid; grid-template-columns: 1fr 1fr; gap: 27px; padding: 30px 2px 0 0; }
.usage-item { display: flex; flex-direction: column; align-items: center; gap: 25px; }
.usage-item > a { display: flex; gap: 4px; font-size: 16px; line-height: 19px; }
.usage-row { display: flex; gap: 9px; width: 104px; font-size: 14px; line-height: 15px; }
.meter { display: flex; align-items: flex-end; width: 31px; height: 100px; background: #e0e0e0; }
.meter i { display: block; width: 100%; background: #99cf5b; }
.stats-chart { width: 100%; margin-top: 41px; overflow: visible; font: 14px "Liberation Sans", sans-serif; fill: #fff; }
.stats-chart .y, .stats-chart .x { text-anchor: end; }
.stats-chart .x { font-size: 13px; }
.note-top { display: flex; justify-content: space-between; gap: 10px; padding-top: 14px; font-size: 16px; line-height: 20px; }
.note-top strong { flex: 1; }
.pager { display: flex; gap: 12px; }
.pager button { width: 25px; height: 25px; background: #ff6a00; font-weight: 700; }
.note-warn { padding-top: 5px; color: #fcc419; font-weight: 700; font-size: 15px; line-height: 20px; }
.note-body { padding-top: 6px; line-height: 18px; }

.status-line { position: fixed; left: 0; bottom: 0; width: 375px; height: 1px; background: #000; z-index: 9; }
```
